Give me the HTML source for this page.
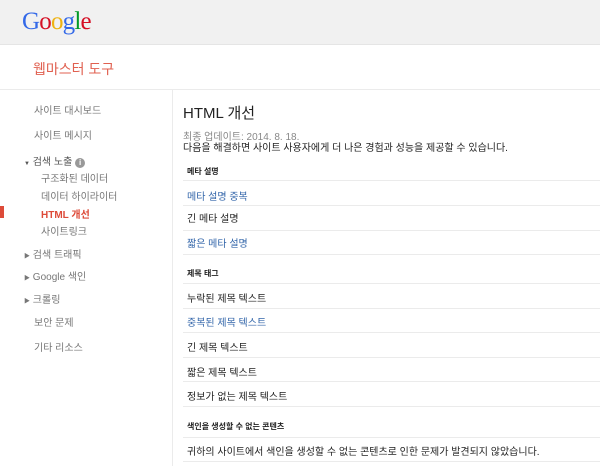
<!DOCTYPE html><html><head><meta charset="utf-8"><style>
*{margin:0;padding:0;box-sizing:border-box}
body{width:600px;height:466px;overflow:hidden;background:#fff;font-family:"Liberation Sans","Noto Sans CJK KR",sans-serif;position:relative}
.hd{position:absolute;left:0;top:0;width:600px;height:45px;background:#f1f1f1;border-bottom:1px solid #e5e5e5}
.logo{position:absolute;left:22px;top:8px;font-family:"Liberation Serif",serif;font-size:25px;letter-spacing:-0.8px}
.bar{position:absolute;left:0;top:45px;width:600px;height:45px;border-bottom:1px solid #ebebeb}
.bar span{position:absolute;left:33px;top:14px;color:#e06050;font-size:14px}
.side{position:absolute;left:172px;top:90px;width:1px;height:376px;background:#ebebeb}
.t{position:absolute;font-size:10px;color:#777;white-space:nowrap}
.c{position:absolute;left:187px;font-size:10px;white-space:nowrap;color:#222}
.ln{position:absolute;left:183px;width:417px;height:1px;background:#ebebeb}
.b{font-weight:bold;font-size:8px;color:#222}
.a{color:#3366aa}
</style></head><body>
<div class="hd"><div class="logo"><span style="color:#3369e8">G</span><span style="color:#d50f25">o</span><span style="color:#eeb211">o</span><span style="color:#3369e8">g</span><span style="color:#009925">l</span><span style="color:#d50f25">e</span></div></div>
<div class="bar"><span>웹마스터 도구</span></div>
<div class="side"></div>
<div class="t" style="left:34px;top:102px">사이트 대시보드</div>
<div class="t" style="left:34px;top:127px">사이트 메시지</div>
<div class="t" style="left:24px;top:153px;color:#555"><span style="font-size:6px">▼</span> 검색 노출 <span style="display:inline-block;width:10px;height:10px;border-radius:50%;background:#999;color:#fff;font-size:8px;text-align:center;line-height:10px;font-weight:bold">i</span></div>
<div class="t" style="left:41px;top:170px">구조화된 데이터</div>
<div class="t" style="left:41px;top:188px">데이터 하이라이터</div>
<div style="position:absolute;left:0;top:206px;width:4px;height:12px;background:#dd4b39"></div>
<div class="t" style="left:41px;top:206px;color:#dd4b39;font-weight:bold">HTML 개선</div>
<div class="t" style="left:41px;top:223px">사이트링크</div>
<div class="t" style="left:24px;top:246px"><span style="font-size:6px">▶</span> 검색 트래픽</div>
<div class="t" style="left:24px;top:268px"><span style="font-size:6px">▶</span> Google 색인</div>
<div class="t" style="left:24px;top:291px"><span style="font-size:6px">▶</span> 크롤링</div>
<div class="t" style="left:34px;top:314px">보안 문제</div>
<div class="t" style="left:34px;top:339px">기타 리소스</div>
<div class="c" style="left:183px;top:102px;font-size:15px;color:#222">HTML 개선</div>
<div class="c" style="left:183px;top:128px;color:#888">최종 업데이트: 2014. 8. 18.</div>
<div class="c" style="left:183px;top:139px">다음을 해결하면 사이트 사용자에게 더 나은 경험과 성능을 제공할 수 있습니다.</div>
<div class="c b" style="top:166px">메타 설명</div><div class="ln" style="top:180px"></div>
<div class="c a" style="top:188px">메타 설명 중복</div><div class="ln" style="top:205px"></div>
<div class="c" style="top:210px">긴 메타 설명</div><div class="ln" style="top:230px"></div>
<div class="c a" style="top:235px">짧은 메타 설명</div><div class="ln" style="top:254px"></div>
<div class="c b" style="top:268px">제목 태그</div><div class="ln" style="top:283px"></div>
<div class="c" style="top:290px">누락된 제목 텍스트</div><div class="ln" style="top:308px"></div>
<div class="c a" style="top:314px">중복된 제목 텍스트</div><div class="ln" style="top:332px"></div>
<div class="c" style="top:339px">긴 제목 텍스트</div><div class="ln" style="top:357px"></div>
<div class="c" style="top:364px">짧은 제목 텍스트</div><div class="ln" style="top:381px"></div>
<div class="c" style="top:388px">정보가 없는 제목 텍스트</div><div class="ln" style="top:406px"></div>
<div class="c b" style="top:421px">색인을 생성할 수 없는 콘텐츠</div><div class="ln" style="top:437px"></div>
<div class="c" style="top:443px">귀하의 사이트에서 색인을 생성할 수 없는 콘텐츠로 인한 문제가 발견되지 않았습니다.</div><div class="ln" style="top:461px"></div>
</body></html>
